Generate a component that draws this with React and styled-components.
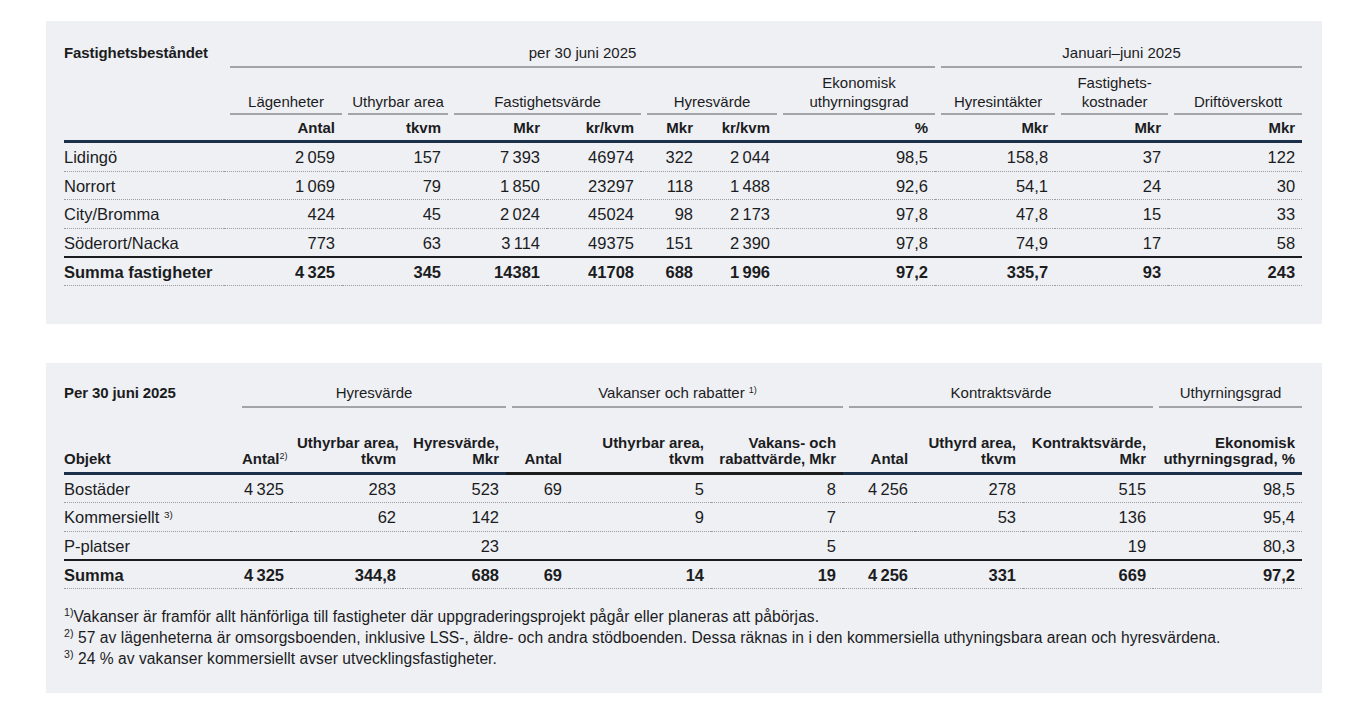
import styled, { createGlobalStyle } from "styled-components";

const GlobalStyle = createGlobalStyle`
  body {
    margin: 0;
    background: #fff;
    color: #1b1c1e;
    font-family: "Liberation Sans", Arial, sans-serif;
  }
`;

const Page = styled.div`
  display: flex;
  flex-direction: column;
  gap: 39px;
  padding: 21px 44px 15px 46px;
`;

const Panel = styled.section`
  background: #eff0f4;
  padding: ${(p) => p.$pad};
`;

const Table = styled.table`
  width: 1238px;
  table-layout: fixed;
  border-collapse: collapse;
  font-size: 16.5px;
`;

const TitleTh = styled.th`
  padding: 0 0 6px 0;
  text-align: left;
  vertical-align: bottom;
  font-size: 15px;
  line-height: 18px;
  font-weight: bold;
  letter-spacing: -0.1px;
`;

const GroupTh = styled.th`
  padding: 0 0 0 6px;
  height: ${(p) => p.$h || 0}px;
  vertical-align: bottom;
  text-align: center;
  font-size: 15px;
  line-height: ${(p) => p.$lh || 18}px;
  font-weight: normal;
  white-space: nowrap;
`;

const Rule = styled.div`
  border-bottom: 2px solid #a3a4a8;
  padding-bottom: ${(p) => p.$pb ?? 4}px;
`;

const UnitTh = styled.th`
  height: 25px;
  padding: 0 7px 0 6px;
  text-align: ${(p) => (p.$left ? "left" : "right")};
  vertical-align: ${(p) => (p.$tall ? "bottom" : "middle")};
  font-size: 15px;
  line-height: 16px;
  font-weight: bold;
  white-space: nowrap;
  border-bottom: 3px solid ${(p) => p.$ink || "#1d3049"};
  ${(p) => p.$tall && "padding-bottom: 5px; height: 59px;"}
  ${(p) => p.$left && "padding-left: 0;"}
`;

const Row = styled.tr`
  font-weight: ${(p) => (p.$total ? "bold" : "normal")};
  border-top: ${(p) => (p.$total ? "2px solid #1b1c1e" : "0")};
`;

const Cell = styled.td`
  height: ${(p) => (p.$total ? 24.5 : 25.5)}px;
  padding: 2px 7px 0 6px;
  text-align: right;
  vertical-align: middle;
  border-bottom: 1px dotted #9c9da1;
  white-space: nowrap;
`;

const LabelCell = styled(Cell)`
  padding-left: 0;
  text-align: left;
`;

const Sup = styled.sup`
  font-size: ${(p) => p.$size || 0.6}em;
  line-height: 0;
  vertical-align: 0.55em;
  font-weight: normal;
`;

const Notes = styled.div`
  margin-top: 17px;
  font-size: 15.6px;
  line-height: 21px;
  letter-spacing: 0.05px;
`;

const t = "\u2009";

const propertyCols = [160, 118, 106, 99, 94, 59, 77, 158, 120, 113, 134];
const propertyRows = [
  ["Lidingö", `2${t}059`, "157", `7${t}393`, "46974", "322", `2${t}044`, "98,5", "158,8", "37", "122"],
  ["Norrort", `1${t}069`, "79", `1${t}850`, "23297", "118", `1${t}488`, "92,6", "54,1", "24", "30"],
  ["City/Bromma", "424", "45", `2${t}024`, "45024", "98", `2${t}173`, "97,8", "47,8", "15", "33"],
  ["Söderort/Nacka", "773", "63", `3${t}114`, "49375", "151", `2${t}390`, "97,8", "74,9", "17", "58"],
];
const propertyTotal = ["Summa fastigheter", `4${t}325`, "345", "14381", "41708", "688", `1${t}996`, "97,2", "335,7", "93", "243"];
const propertyHeads = [
  ["Lägenheter", 1],
  ["Uthyrbar area", 1],
  ["Fastighetsvärde", 2],
  ["Hyresvärde", 2],
  [["Ekonomisk", "uthyrningsgrad"], 1],
  ["Hyresintäkter", 1],
  [["Fastighets-", "kostnader"], 1],
  ["Driftöverskott", 1],
];
const propertyUnits = ["Antal", "tkvm", "Mkr", "kr/kvm", "Mkr", "kr/kvm", "%", "Mkr", "Mkr", "Mkr"];

const rentCols = [172, 55, 112, 103, 63, 142, 132, 72, 108, 130, 149];
const rentRows = [
  ["Bostäder", `4${t}325`, "283", "523", "69", "5", "8", `4${t}256`, "278", "515", "98,5"],
  [
    <>Kommersiellt <Sup>3)</Sup></>,
    "", "62", "142", "", "9", "7", "", "53", "136", "95,4",
  ],
  ["P-platser", "", "", "23", "", "", "5", "", "", "19", "80,3"],
];
const rentTotal = ["Summa", `4${t}325`, "344,8", "688", "69", "14", "19", `4${t}256`, "331", "669", "97,2"];
const rentGroups = [
  ["Hyresvärde", 3],
  [<>Vakanser och rabatter <Sup>1)</Sup></>, 3],
  ["Kontraktsvärde", 3],
  ["Uthyrningsgrad", 1],
];
const rentHeads = [
  [<>Antal<Sup>2)</Sup></>],
  ["Uthyrbar area,", "tkvm"],
  ["Hyresvärde,", "Mkr"],
  ["Antal"],
  ["Uthyrbar area,", "tkvm"],
  ["Vakans- och", "rabattvärde, Mkr"],
  ["Antal"],
  ["Uthyrd area,", "tkvm"],
  ["Kontraktsvärde,", "Mkr"],
  ["Ekonomisk", "uthyrningsgrad, %"],
];

function Lines({ text }) {
  const parts = Array.isArray(text) ? text : [text];
  return parts.map((part, i) => (
    <div key={i}>{part}</div>
  ));
}

function BodyRows({ rows, total }) {
  return (
    <tbody>
      {rows.map((row, r) => (
        <Row key={r}>
          <LabelCell>{row[0]}</LabelCell>
          {row.slice(1).map((v, i) => (
            <Cell key={i}>{v}</Cell>
          ))}
        </Row>
      ))}
      <Row $total>
        <LabelCell $total>{total[0]}</LabelCell>
        {total.slice(1).map((v, i) => (
          <Cell key={i} $total>{v}</Cell>
        ))}
      </Row>
    </tbody>
  );
}

function PropertyTable() {
  return (
    <Table>
      <colgroup>
        {propertyCols.map((w, i) => (
          <col key={i} style={{ width: w }} />
        ))}
      </colgroup>
      <thead>
        <tr>
          <TitleTh>Fastighetsbeståndet</TitleTh>
          <GroupTh colSpan={7}>
            <Rule>per 30 juni 2025</Rule>
          </GroupTh>
          <GroupTh colSpan={3}>
            <Rule>Januari–juni 2025</Rule>
          </GroupTh>
        </tr>
        <tr>
          <GroupTh $h={47} $lh={19} />
          {propertyHeads.map(([label, span], i) => (
            <GroupTh key={i} colSpan={span} $lh={19}>
              <Rule $pb={2}>
                <Lines text={label} />
              </Rule>
            </GroupTh>
          ))}
        </tr>
        <tr>
          <UnitTh $left />
          {propertyUnits.map((u, i) => (
            <UnitTh key={i}>{u}</UnitTh>
          ))}
        </tr>
      </thead>
      <BodyRows rows={propertyRows} total={propertyTotal} />
    </Table>
  );
}

function RentTable() {
  return (
    <Table>
      <colgroup>
        {rentCols.map((w, i) => (
          <col key={i} style={{ width: w }} />
        ))}
      </colgroup>
      <thead>
        <tr>
          <TitleTh>Per 30 juni 2025</TitleTh>
          {rentGroups.map(([label, span], i) => (
            <GroupTh key={i} colSpan={span}>
              <Rule>{label}</Rule>
            </GroupTh>
          ))}
        </tr>
        <tr>
          <UnitTh $left $tall>Objekt</UnitTh>
          {rentHeads.map((lines, i) => (
            <UnitTh key={i} $tall $ink={i >= 3 && i <= 5 ? "#1b1c1e" : undefined}>
              <Lines text={lines} />
            </UnitTh>
          ))}
        </tr>
      </thead>
      <BodyRows rows={rentRows} total={rentTotal} />
    </Table>
  );
}

export default function App() {
  return (
    <>
      <GlobalStyle />
      <Page>
        <Panel $pad="23px 20px 38px 18px">
          <PropertyTable />
        </Panel>
        <Panel $pad="21px 20px 24px 18px">
          <RentTable />
          <Notes>
            <div>
              <Sup $size={0.68}>1)</Sup>Vakanser är framför allt hänförliga till fastigheter där uppgraderingsprojekt pågår eller planeras att påbörjas.
            </div>
            <div>
              <Sup $size={0.68}>2)</Sup> 57 av lägenheterna är omsorgsboenden, inklusive LSS-, äldre- och andra stödboenden. Dessa räknas in i den kommersiella uthyningsbara arean och hyresvärdena.
            </div>
            <div>
              <Sup $size={0.68}>3)</Sup> 24 % av vakanser kommersiellt avser utvecklingsfastigheter.
            </div>
          </Notes>
        </Panel>
      </Page>
    </>
  );
}
